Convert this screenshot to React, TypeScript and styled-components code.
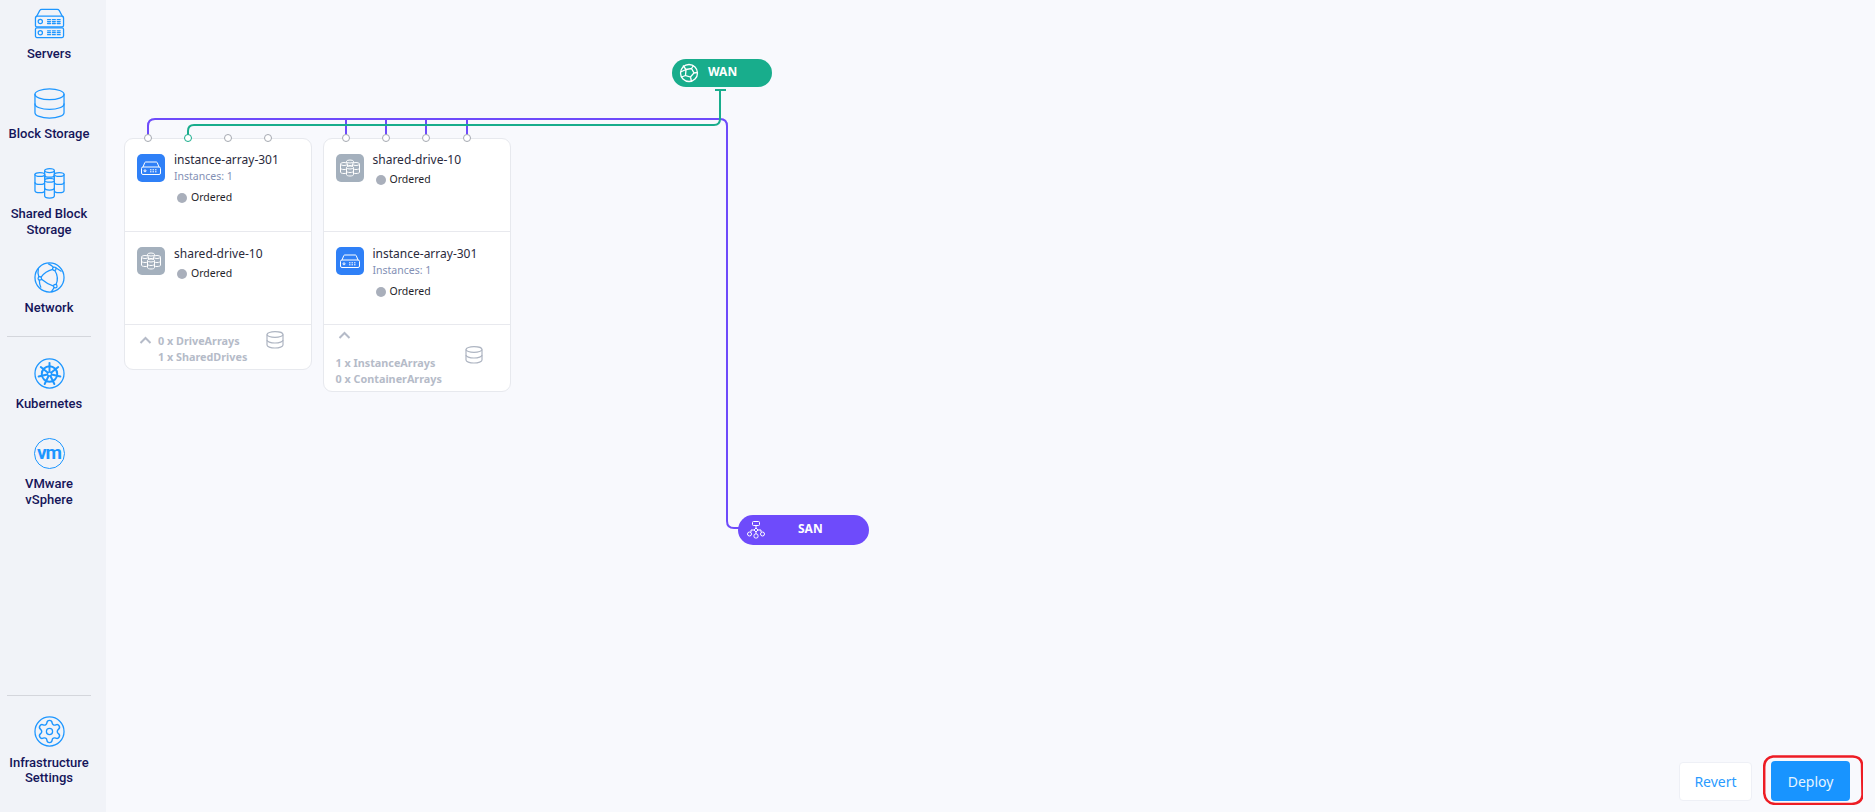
import React from 'react';
import styled, { createGlobalStyle } from 'styled-components';

const GlobalStyle = createGlobalStyle`
    html, body {
        margin: 0;
        height: 100%;
        overflow: hidden;
    }
    #root {
        height: 100%;
    }
`

const Page = styled.div`
    display: flex;
    height: 812px;
    width: 1875px;
    background-color: #f8f9fd;
`

const Sidebar = styled.nav`
    display: flex;
    flex-direction: column;
    width: 106px;
    flex-shrink: 0;
    background-color: #f1f3f8;
    padding: 8px 0 0;
    box-sizing: border-box;
`

const NavItem = styled.div<{ $gap?: number; $after?: number }>`
    display: flex;
    flex-direction: column;
    align-items: center;
    width: 98px;
    gap: ${p => p.$gap ?? 7}px;
    margin-bottom: ${p => p.$after ?? 26.5}px;
    color: #15155a;
    font-family: Roboto, sans-serif;
    font-weight: 500;
    font-size: 13px;
    line-height: 15.5px;
    text-align: center;
`

const NavIcon = styled.svg`
    width: 31px;
    height: 31px;
    display: block;
    flex-shrink: 0;
    fill: none;
    stroke: #1d96ff;
    stroke-width: 1.3;
    stroke-linecap: round;
    stroke-linejoin: round;
`

const VmRing = styled.div`
    width: 31px;
    height: 31px;
    box-sizing: border-box;
    border: 1.3px solid #1d96ff;
    border-radius: 50%;
    display: flex;
    align-items: center;
    justify-content: center;
    color: #1d96ff;
    font-family: Roboto, sans-serif;
    font-weight: 700;
    font-size: 19px;
    line-height: 1;
    letter-spacing: -1px;
    padding-bottom: 3px;
`

const NavDivider = styled.hr<{ $after: number }>`
    width: 84px;
    margin: 0 0 ${p => p.$after}px 7px;
    border: 0;
    border-top: 1px solid #d4d6dc;
`

const Spacer = styled.div`
    flex: 1;
`

const Main = styled.main`
    position: relative;
    flex: 1;
    display: flex;
    flex-direction: column;
    justify-content: flex-end;
`

const Wires = styled.svg`
    position: absolute;
    left: -106px;
    top: 0;
    width: 1875px;
    height: 812px;
    fill: none;
    pointer-events: none;
    z-index: 1;
`

const Card = styled.section<{ $x: number; $w: number }>`
    position: absolute;
    left: ${p => p.$x - 106}px;
    top: 138px;
    width: ${p => p.$w}px;
    box-sizing: border-box;
    background: #fff;
    border: 1px solid #e7e9ee;
    border-radius: 9px;
    font-family: "Noto Sans", sans-serif;
`

const Row = styled.div`
    display: flex;
    gap: 9px;
    height: 93px;
    box-sizing: border-box;
    padding: 15px 12px 0;
    border-bottom: 1px solid #e8e9ee;
`

const Tile = styled.div<{ $tone: 'blue' | 'grey' }>`
    width: 28px;
    height: 28px;
    flex-shrink: 0;
    border-radius: 5px;
    background: ${p => (p.$tone === 'blue' ? '#2f80f7' : '#a4b0bd')};
    display: flex;
    align-items: center;
    justify-content: center;
`

const TileIcon = styled.svg`
    width: 22px;
    height: 22px;
    fill: none;
    stroke: #fff;
    stroke-width: 1;
    stroke-linejoin: round;
`

const Info = styled.div<{ $top: number }>`
    display: flex;
    flex-direction: column;
    min-width: 0;
    margin-top: ${p => p.$top}px;
`

const Title = styled.div`
    font-size: 12px;
    line-height: 16px;
    color: #2a2a3c;
    white-space: nowrap;
`

const Sub = styled.div`
    font-size: 10.5px;
    line-height: 15px;
    margin-top: 1px;
    color: #8390b5;
    white-space: nowrap;
`

const Status = styled.div<{ $top: number }>`
    display: flex;
    align-items: center;
    gap: 4px;
    margin: ${p => p.$top}px 0 0 3px;
    font-size: 10.5px;
    line-height: 15px;
    color: #1f1f2b;
`

const Dot = styled.span`
    width: 10px;
    height: 10px;
    flex-shrink: 0;
    border-radius: 50%;
    background: #a9afbb;
`

const Footer = styled.div<{ $stacked?: boolean }>`
    position: relative;
    display: flex;
    flex-direction: column;
    box-sizing: border-box;
    height: ${p => (p.$stacked ? 66 : 44)}px;
    padding: ${p => (p.$stacked ? '30px 0 0 12px' : '8px 0 0 33px')};
    color: #b5bbc8;
    font-size: 10.8px;
    font-weight: 700;
    line-height: 15.5px;
`

const Chevron = styled.svg<{ $x: number; $y: number }>`
    position: absolute;
    left: ${p => p.$x}px;
    top: ${p => p.$y}px;
    width: 13px;
    height: 8px;
    fill: none;
    stroke: #b5bbc8;
    stroke-width: 2;
`

const DbIcon = styled.svg<{ $x: number; $y: number }>`
    position: absolute;
    left: ${p => p.$x}px;
    top: ${p => p.$y}px;
    width: 18px;
    height: 18px;
    fill: none;
    stroke: #aeb5c2;
    stroke-width: 1.2;
`

const Pill = styled.div<{ $x: number; $y: number; $w: number; $h: number; $bg: string; $gap: number; $pad: number }>`
    position: absolute;
    left: ${p => p.$x - 106}px;
    top: ${p => p.$y}px;
    width: ${p => p.$w}px;
    height: ${p => p.$h}px;
    box-sizing: border-box;
    padding: 0 0 0 ${p => p.$pad}px;
    border-radius: ${p => p.$h / 2}px;
    background: ${p => p.$bg};
    display: flex;
    align-items: center;
    gap: ${p => p.$gap}px;
    color: #fff;
    font-family: "Noto Sans", sans-serif;
    font-weight: 700;
    font-size: 12px;
`

const PillLabel = styled.span`
    margin-top: -3px;
`

const PillIcon = styled.svg`
    width: 20px;
    height: 20px;
    fill: none;
    stroke: #fff;
    stroke-width: 1;
    flex-shrink: 0;
`

const Actions = styled.div`
    display: flex;
    justify-content: flex-end;
    align-items: center;
    gap: 19px;
    padding: 0 25px 11px 0;
    font-family: "Noto Sans", sans-serif;
`

const Button = styled.button<{ $primary?: boolean }>`
    position: relative;
    height: ${p => (p.$primary ? 40 : 39)}px;
    width: ${p => (p.$primary ? 79 : 73)}px;
    padding: 0;
    font: inherit;
    font-size: 14px;
    border-radius: 4px;
    color: ${p => (p.$primary ? '#e6f4ff' : '#2a9bff')};
    background: ${p => (p.$primary ? '#1894ff' : '#ffffff')};
    border: ${p => (p.$primary ? 'none' : '1px solid #eef0f6')};
`

// hand drawn red mark around the deploy button
const Highlight = styled.svg`
    position: absolute;
    left: -8px;
    top: -6px;
    width: 100px;
    height: 50px;
    fill: none;
    stroke: #ed1c24;
    stroke-width: 2.5;
`

const Servers = () => (
    <NavIcon viewBox="0 0 32 32">
        <path d="M2.5 9 L6 2.5 Q6.5 1.5 8 1.5 H24 Q25.5 1.5 26 2.5 L29.5 9" />
        <rect x="1.5" y="8.5" width="29" height="11" rx="1.5" />
        <rect x="1.5" y="20.5" width="29" height="10" rx="1.5" />
        <circle cx="6.5" cy="14" r="2.2" />
        <circle cx="6.5" cy="25.5" r="2.2" />
        <path d="M14 12h3m2 0h3m2 0h3M14 14h3m2 0h3m2 0h3M14 16h3m2 0h3m2 0h3M14 23.5h3m2 0h3m2 0h3M14 25.5h3m2 0h3m2 0h3M14 27.5h3m2 0h3m2 0h3" />
    </NavIcon>
)

const BlockStorage = () => (
    <NavIcon viewBox="0 0 32 32">
        <ellipse cx="16" cy="6.5" rx="15" ry="5.5" />
        <path d="M1 6.5V25.5C1 28.5 7.5 31 16 31S31 28.5 31 25.5V6.5" />
        <path d="M1 16.5C1 19.5 7.5 22 16 22S31 19.5 31 16.5" />
    </NavIcon>
)

const Cylinder = ({ x, y, h }: { x: number; y: number; h: number }) => (
    <g transform={`translate(${x} ${y})`}>
        <path d={`M0.5 2.2V${h - 2}C0.5 ${h - 0.7} 2.5 ${h} 5.5 ${h}S10.5 ${h - 0.7} 10.5 ${h - 2}V2.2`} fill="#f1f3f8" />
        <ellipse cx="5.5" cy="2.2" rx="5" ry="2" fill="#f1f3f8" />
        <path d={`M0.5 ${h / 2}C0.5 ${h / 2 + 1.3} 2.5 ${h / 2 + 2} 5.5 ${h / 2 + 2}S10.5 ${h / 2 + 1.3} 10.5 ${h / 2}`} />
    </g>
)

const SharedStorage = () => (
    <NavIcon viewBox="0 0 32 32">
        <Cylinder x={10.5} y={0.5} h={14} />
        <Cylinder x={0.5} y={4.5} h={21} />
        <Cylinder x={20.5} y={4.5} h={21} />
        <Cylinder x={10.5} y={10.5} h={20.5} />
    </NavIcon>
)

const Network = () => (
    <NavIcon viewBox="0 0 32 32">
        <circle cx="16" cy="16" r="15" />
        <circle cx="21" cy="7" r="1.8" />
        <circle cx="6" cy="17" r="1.8" />
        <circle cx="22" cy="25" r="1.8" />
        <path d="M19.3 7.5Q11.5 9.5 7.3 15.5M21.5 8.8Q26 16 22.8 23.3M7.8 17.8Q14 23 20.2 24.8M22.5 6 28 9.5M15 2Q18 3.5 20 5.3M5 15.3Q3.5 11 4.5 7M5.5 18.8Q5.5 22.5 7 26M20.8 26.5 18 30.5" />
    </NavIcon>
)

const Kubernetes = () => (
    <NavIcon viewBox="0 0 32 32">
        <circle cx="16" cy="16" r="15" />
        <g strokeWidth="2">
            <circle cx="16" cy="16.5" r="8" />
            {[0, 51.4, 102.8, 154.2, 205.7, 257.1, 308.5].map(a => (
                <path key={a} d="M16 16.5V5" transform={`rotate(${a} 16 16.5)`} />
            ))}
        </g>
        <circle cx="16" cy="16.5" r="2" fill="#f1f3f8" />
    </NavIcon>
)

const Gear = () => (
    <NavIcon viewBox="0 0 32 32">
        <circle cx="16" cy="16" r="15" />
        <g transform="translate(2.2 2.2) scale(1.15)">
            <path d="M9.671 4.136a2.34 2.34 0 0 1 4.659 0 2.34 2.34 0 0 0 3.319 1.915 2.34 2.34 0 0 1 2.33 4.033 2.34 2.34 0 0 0 0 3.831 2.34 2.34 0 0 1-2.33 4.033 2.34 2.34 0 0 0-3.319 1.915 2.34 2.34 0 0 1-4.659 0 2.34 2.34 0 0 0-3.32-1.915 2.34 2.34 0 0 1-2.33-4.033 2.34 2.34 0 0 0 0-3.831A2.34 2.34 0 0 1 6.35 6.051a2.34 2.34 0 0 0 3.32-1.915" />
        </g>
        <circle cx="16" cy="16" r="3.2" />
    </NavIcon>
)

const InstanceTile = () => (
    <Tile $tone="blue">
        <TileIcon viewBox="0 0 22 22">
            <path d="M3 10 4.8 5.5Q5.1 5 6 5H16Q16.9 5 17.2 5.5L19 10" />
            <rect x="1.5" y="10" width="19" height="7.5" rx="1.5" />
            <circle cx="5" cy="13.8" r="1" />
            <path d="M10 12.8h1.5m1 0h1.5m1 0h1.5M10 14.8h1.5m1 0h1.5m1 0h1.5" />
        </TileIcon>
    </Tile>
)

const SmallCyl = ({ x, y, h }: { x: number; y: number; h: number }) => (
    <g transform={`translate(${x} ${y})`}>
        <path d={`M0 1.5V${h - 1.5}C0 ${h - 0.5} 1.5 ${h} 3.5 ${h}S7 ${h - 0.5} 7 ${h - 1.5}V1.5`} fill="#a4b0bd" />
        <ellipse cx="3.5" cy="1.5" rx="3.5" ry="1.5" fill="#a4b0bd" />
        <path d={`M0 ${h / 2}C0 ${h / 2 + 1} 1.5 ${h / 2 + 1.5} 3.5 ${h / 2 + 1.5}S7 ${h / 2 + 1} 7 ${h / 2}`} />
    </g>
)

const SharedTile = () => (
    <Tile $tone="grey">
        <TileIcon viewBox="0 0 22 22">
            <SmallCyl x={7.5} y={3} h={8} />
            <SmallCyl x={1.5} y={5.5} h={11} />
            <SmallCyl x={13.5} y={5.5} h={11} />
            <SmallCyl x={7.5} y={9} h={10} />
        </TileIcon>
    </Tile>
)

const Db = ({ x, y }: { x: number; y: number }) => (
    <DbIcon $x={x} $y={y} viewBox="0 0 18 18">
        <ellipse cx="9" cy="3.5" rx="8" ry="2.8" />
        <path d="M1 3.5V14C1 15.6 4.5 17 9 17S17 15.6 17 14V3.5" />
        <path d="M1 9C1 10.6 4.5 12 9 12S17 10.6 17 9" />
    </DbIcon>
)

const Up = ({ x, y }: { x: number; y: number }) => (
    <Chevron $x={x} $y={y} viewBox="0 0 13 8">
        <path d="M1.5 7 6.5 2l5 5" />
    </Chevron>
)

const InstanceRow = ({ top }: { top: number }) => (
    <Row>
        <InstanceTile />
        <Info $top={top}>
            <Title>instance-array-301</Title>
            <Sub>Instances: 1</Sub>
            <Status $top={6}><Dot />Ordered</Status>
        </Info>
    </Row>
)

const DriveRow = ({ top }: { top: number }) => (
    <Row>
        <SharedTile />
        <Info $top={top}>
            <Title>shared-drive-10</Title>
            <Status $top={4}><Dot />Ordered</Status>
        </Info>
    </Row>
)

const PORTS_A = [148, 188, 228, 268]
const PORTS_B = [346, 386, 426, 467]

export default function App() {
    return (
        <>
        <GlobalStyle />
        <Page>
            <Sidebar>
                <NavItem><Servers />Servers</NavItem>
                <NavItem><BlockStorage />Block Storage</NavItem>
                <NavItem $after={25}><SharedStorage /><span>Shared Block<br />Storage</span></NavItem>
                <NavItem $after={20.5}><Network />Network</NavItem>
                <NavDivider $after={21} />
                <NavItem><Kubernetes />Kubernetes</NavItem>
                <NavItem $after={0}><VmRing>vm</VmRing><span>VMware<br />vSphere</span></NavItem>
                <Spacer />
                <NavDivider $after={20} />
                <NavItem $gap={7.5}><Gear /><span>Infrastructure<br />Settings</span></NavItem>
            </Sidebar>
            <Main>
                <Wires viewBox="0 0 1875 812">
                    <g stroke="#6e4bfb" strokeWidth="2">
                        <path d="M148 138V126Q148 119 155 119H720Q727 119 727 126V521Q727 528 734 528H740" />
                        {PORTS_B.map(x => <path key={x} d={`M${x} 119V135`} />)}
                    </g>
                    <g stroke="#18ad8c" strokeWidth="2">
                        <path d="M188 138V131Q188 125 194 125H714Q720 125 720 119V90" />
                        <path d="M715 90H726" />
                    </g>
                    {PORTS_A.map((x, i) => (
                        <circle key={x} cx={x} cy="138" r="3.5" fill="#fff" stroke={i === 1 ? '#18ad8c' : '#a5a9b1'} strokeWidth="1" />
                    ))}
                    {PORTS_B.map(x => (
                        <circle key={x} cx={x} cy="138" r="3.5" fill="#fff" stroke="#a5a9b1" strokeWidth="1" />
                    ))}
                </Wires>

                <Card $x={124} $w={188}>
                    <InstanceRow top={-2} />
                    <DriveRow top={-1} />
                    <Footer>
                        <Up x={14} y={11} />
                        <span>0 x DriveArrays</span>
                        <span>1 x SharedDrives</span>
                        <Db x={141} y={6} />
                    </Footer>
                </Card>

                <Card $x={322.5} $w={188}>
                    <DriveRow top={-2} />
                    <InstanceRow top={-1} />
                    <Footer $stacked>
                        <Up x={14} y={6} />
                        <span>1 x InstanceArrays</span>
                        <span>0 x ContainerArrays</span>
                        <Db x={141} y={21} />
                    </Footer>
                </Card>

                <Pill $x={672} $y={59} $w={100} $h={28} $bg="#18ad8c" $gap={9} $pad={7}>
                    <PillIcon viewBox="0 0 20 20">
                        <circle cx="10" cy="10" r="8.5" strokeWidth="1.3" />
                        <path d="M7 6.5 12.5 5.5 15 10 11.5 14 6.5 12.5Z M7 6.5 4 2.5M12.5 5.5 14.5 2.5M15 10 18.5 9.5M11.5 14 12.5 18.5M6.5 12.5 2.5 14M7 6.5 1.5 9" strokeWidth="1.3" />
                    </PillIcon>
                    <PillLabel>WAN</PillLabel>
                </Pill>
                <Pill $x={738} $y={515} $w={131} $h={30} $bg="#6e4bfb" $gap={32} $pad={8}>
                    <PillIcon viewBox="0 0 20 20">
                        <rect x="6.5" y="1.5" width="7" height="4" rx="1" />
                        <path d="M10 5.5V8M10 8 12 10 10 12 8 10ZM8 10H5V12M12 10H15V12M10 12V14" />
                        <circle cx="3.5" cy="14" r="2" />
                        <circle cx="16.5" cy="14" r="2" />
                        <rect x="8" y="14" width="4" height="4" rx="1.5" />
                    </PillIcon>
                    <PillLabel>SAN</PillLabel>
                </Pill>

                <Actions>
                    <Button>Revert</Button>
                    <Button $primary>
                        Deploy
                        <Highlight viewBox="0 0 100 50">
                            <path d="M10 1.5H90Q98 2 99 9L99.5 40Q99 48 89 49H12Q2 48 1.2 38V12Q1.2 3 10 1.5Z" />
                        </Highlight>
                    </Button>
                </Actions>
            </Main>
        </Page>
        </>
    );
}
